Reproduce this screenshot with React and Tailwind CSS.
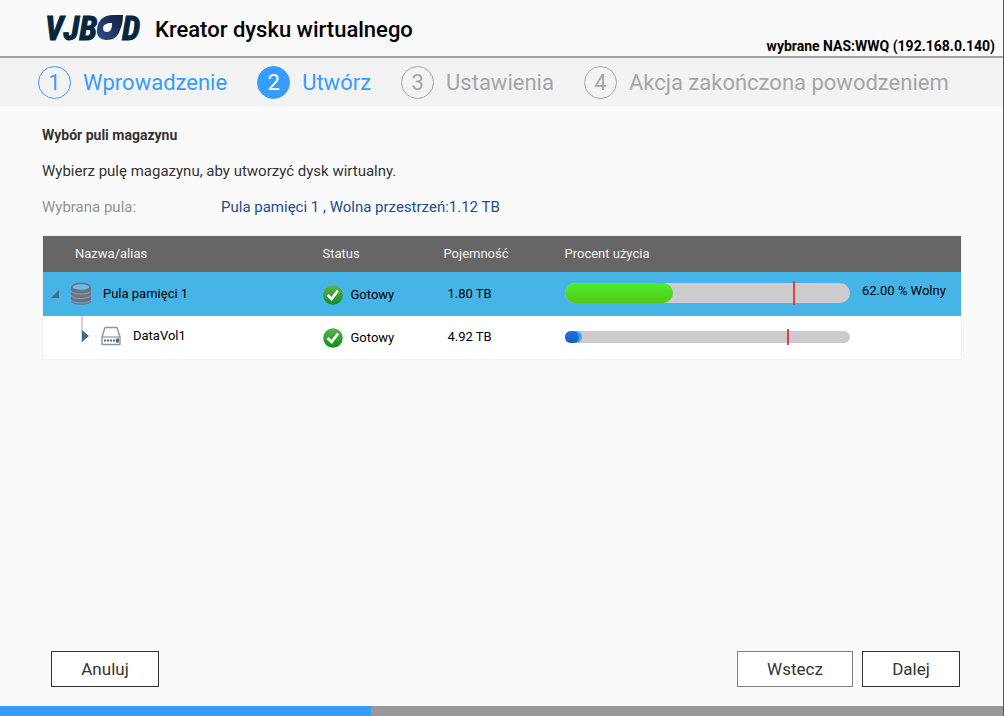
import clsx from 'clsx';

const STEPS = [
  { label: 'Wprowadzenie', state: 'done' },
  { label: 'Utwórz', state: 'current' },
  { label: 'Ustawienia', state: 'todo' },
  { label: 'Akcja zakończona powodzeniem', state: 'todo' }
];

const POOL = { name: 'Pula pamięci 1', capacity: '1.80 TB', used: 38, alert: 80, free: '62.00 % Wolny' };
const VOLUME = { name: 'DataVol1', capacity: '4.92 TB', used: 5, reserved: 6, alert: 78 };

function Logo() {
  return (
    <svg className="w-[102px] h-11 shrink-0" viewBox="0 0 102 44" role="img" aria-label="VJBOD">
      <defs>
        <linearGradient id="drop" x1="1" y1="0" x2="0" y2="1">
          <stop offset="0" stopColor="#0d1f3f" />
          <stop offset="1" stopColor="#324f8c" />
        </linearGradient>
      </defs>
      <g
        fill="#06263f"
        stroke="#06263f"
        strokeWidth="1"
        fontFamily="'Liberation Sans Narrow', 'Roboto Condensed', Roboto, sans-serif"
        fontWeight="700"
        fontStyle="italic"
        fontSize="33"
      >
        <text x="0" y="32">VJB</text>
        <text x="77" y="32">D</text>
      </g>
      <path
        fill="url(#drop)"
        fillRule="evenodd"
        d="M78 7 C78 12 77 18 75 22 C73 29 68 32 62 32 C55 32 51 28 52 21 C53 12 59 7 68 7 Z M67 15 C61 15 58 17 58 20 C58 23 60 24 62 24 C66 24 67 20 67 15 Z"
      />
    </svg>
  );
}

function PoolIcon() {
  return (
    <svg className="w-5 h-6 shrink-0" viewBox="0 0 20 24" aria-hidden="true">
      <path fill="#6b7486" d="M0 5 V19 C0 24 20 24 20 19 V5 Z" />
      <ellipse cx="10" cy="5" rx="9.2" ry="3.6" fill="#68bfe6" stroke="#6b7486" strokeWidth="1.6" />
      <path fill="none" stroke="#93a3b4" strokeWidth="0.9" d="M0 9 C2 13 18 13 20 9 M0 13.5 C2 17.5 18 17.5 20 13.5 M0 18 C2 22 18 22 20 18" />
    </svg>
  );
}

function VolumeIcon() {
  return (
    <svg className="w-5 h-5 shrink-0" viewBox="0 0 20 20" aria-hidden="true">
      <path fill="#fff" stroke="#8a93a8" strokeWidth="1.4" strokeLinejoin="round" d="M4 1.5 H16 L19 11 V18.5 H1 V11 Z" />
      <path fill="none" stroke="#8a93a8" strokeWidth="1.2" d="M1 11 H19" />
      <path fill="#5b6580" d="M3 13.5h2v2h-2z M6 13.5h2v2h-2z M9 13.5h2v2h-2z M12 13.5h2v2h-2z M15 12.5h3v4h-3z" />
    </svg>
  );
}

function Status() {
  return (
    <div className="flex items-center gap-2 pt-0.5">
      <svg className="w-5 h-5 shrink-0" viewBox="0 0 20 20" aria-hidden="true">
        <defs>
          <linearGradient id="ready" x1="0" y1="0" x2="0" y2="1">
            <stop offset="0" stopColor="#5cb548" />
            <stop offset="1" stopColor="#0d8f1c" />
          </linearGradient>
        </defs>
        <circle cx="10" cy="10" r="9.8" fill="url(#ready)" />
        <path fill="none" stroke="#fff" strokeWidth="2.8" d="M4.5 10 L8.6 14 L15 5.5" />
      </svg>
      <span>Gotowy</span>
    </div>
  );
}

function Usage({ used, reserved, alert, free, large }) {
  return (
    <div className="flex items-start gap-3">
      <div className={clsx('relative flex-1 rounded-full bg-[#cccccc]', large ? 'h-5' : 'h-3')}>
        {reserved && (
          <div className="absolute inset-y-0 left-0 rounded-full bg-[#3ba7fa]" style={{ width: `${reserved}%` }} />
        )}
        <div
          className={clsx(
            'absolute inset-y-0 left-0 rounded-full bg-linear-to-b',
            large ? 'from-[#45ee2c] to-[#54c814]' : 'from-[#1c74e0] to-[#125fbd]'
          )}
          style={{ width: `${used}%` }}
        />
        <div className="absolute -inset-y-0.5 w-0.5 bg-[#e8403c]" style={{ left: `${alert}%` }} />
      </div>
      <div className="w-[87px] whitespace-nowrap leading-4">{free}</div>
    </div>
  );
}

export default function App() {
  return (
    <div className="min-h-screen flex flex-col bg-[#fafafa] border-r border-[#555555] font-[Roboto,sans-serif] text-[#333333]">
      <header className="flex items-end justify-between h-[58px] border-b-2 border-[#a0a0a0] pl-[45px] pr-2 text-black">
        <div className="flex items-center gap-2 pb-1">
          <Logo />
          <h1 className="text-[22px] leading-7 font-medium">Kreator dysku wirtualnego</h1>
        </div>
        <p className="text-sm leading-5 font-bold">wybrane NAS:WWQ (192.168.0.140)</p>
      </header>

      <ol className="flex items-center gap-[30px] h-12 bg-[#f3f3f3] px-[38px] text-[22px] whitespace-nowrap">
        {STEPS.map((step, i) => (
          <li
            key={step.label}
            aria-current={step.state === 'current' ? 'step' : undefined}
            className={clsx('flex items-center gap-3', step.state === 'todo' ? 'text-[#a6a6a6]' : 'text-[#379cff]')}
          >
            <span
              className={clsx(
                'flex items-center justify-center size-[33px] rounded-full border border-current',
                step.state === 'current' && 'bg-[#379cff]'
              )}
            >
              <span className={clsx(step.state === 'current' && 'text-white')}>{i + 1}</span>
            </span>
            {step.label}
          </li>
        ))}
      </ol>

      <main className="flex-1 pl-[42px] pr-[41px] pt-[19px] text-[15px] leading-5">
        <h2 className="font-bold text-sm leading-5">Wybór puli magazynu</h2>
        <p className="mt-4">Wybierz pulę magazynu, aby utworzyć dysk wirtualny.</p>
        <dl className="flex mt-4">
          <dt className="w-[179px] text-[#929292]">Wybrana pula:</dt>
          <dd className="text-[#1c4f8b]">Pula pamięci 1 , Wolna przestrzeń:1.12 TB</dd>
        </dl>

        <table className="w-full mt-[18px] table-fixed border border-[#f0f0f0] bg-white text-[13px] text-black">
          <colgroup>
            <col className="w-[268px]" />
            <col className="w-[121px]" />
            <col className="w-[121px]" />
            <col />
          </colgroup>
          <thead className="bg-[#666666] text-left text-[#f2f2f2]">
            <tr className="h-9">
              <th className="pl-8 font-normal">Nazwa/alias</th>
              <th className="pl-3 font-normal">Status</th>
              <th className="pl-3 font-normal">Pojemność</th>
              <th className="pl-3 font-normal">Procent użycia</th>
            </tr>
          </thead>
          <tbody>
            <tr className="h-11 bg-[#46b4e6]">
              <td className="pl-2">
                <div className="flex items-center gap-3">
                  <svg className="w-2 h-2 shrink-0" viewBox="0 0 8 8" aria-hidden="true">
                    <path fill="#4a6a8a" d="M8 0 V8 H0 Z" />
                  </svg>
                  <PoolIcon />
                  {POOL.name}
                </div>
              </td>
              <td className="pl-3"><Status /></td>
              <td className="pl-4">{POOL.capacity}</td>
              <td className="pl-3 pr-3 pb-0.5">
                <Usage used={POOL.used} alert={POOL.alert} free={POOL.free} large />
              </td>
            </tr>
            <tr className="h-11">
              <td className="pl-[38px] align-top">
                <div className="flex items-start gap-3">
                  <svg className="w-2 h-7 shrink-0" viewBox="0 0 8 28" aria-hidden="true">
                    <path stroke="#c4c4c4" strokeWidth="1.5" d="M1 0 V26" />
                    <path fill="#456a8e" d="M1 14 L8 20 L1 26 Z" />
                  </svg>
                  <div className="flex items-center gap-3 pt-2.5">
                    <VolumeIcon />
                    {VOLUME.name}
                  </div>
                </div>
              </td>
              <td className="pl-3"><Status /></td>
              <td className="pl-4">{VOLUME.capacity}</td>
              <td className="pl-3 pr-3">
                <Usage used={VOLUME.used} reserved={VOLUME.reserved} alert={VOLUME.alert} />
              </td>
            </tr>
          </tbody>
        </table>
      </main>

      <footer>
        <div className="flex gap-[9px] pl-[51px] pr-[43px] pb-[19px] text-[17px] leading-5">
          <button type="button" className="h-9 w-[108px] mr-auto border border-[#333333] bg-white">Anuluj</button>
          <button type="button" className="h-9 w-[116px] border border-[#808080] bg-white">Wstecz</button>
          <button type="button" className="h-9 w-[98px] border border-[#333333] bg-white">Dalej</button>
        </div>
        <div className="h-2.5 bg-[#999999]">
          <div className="h-full w-[37%] bg-[#379cff]" />
        </div>
      </footer>
    </div>
  );
}
